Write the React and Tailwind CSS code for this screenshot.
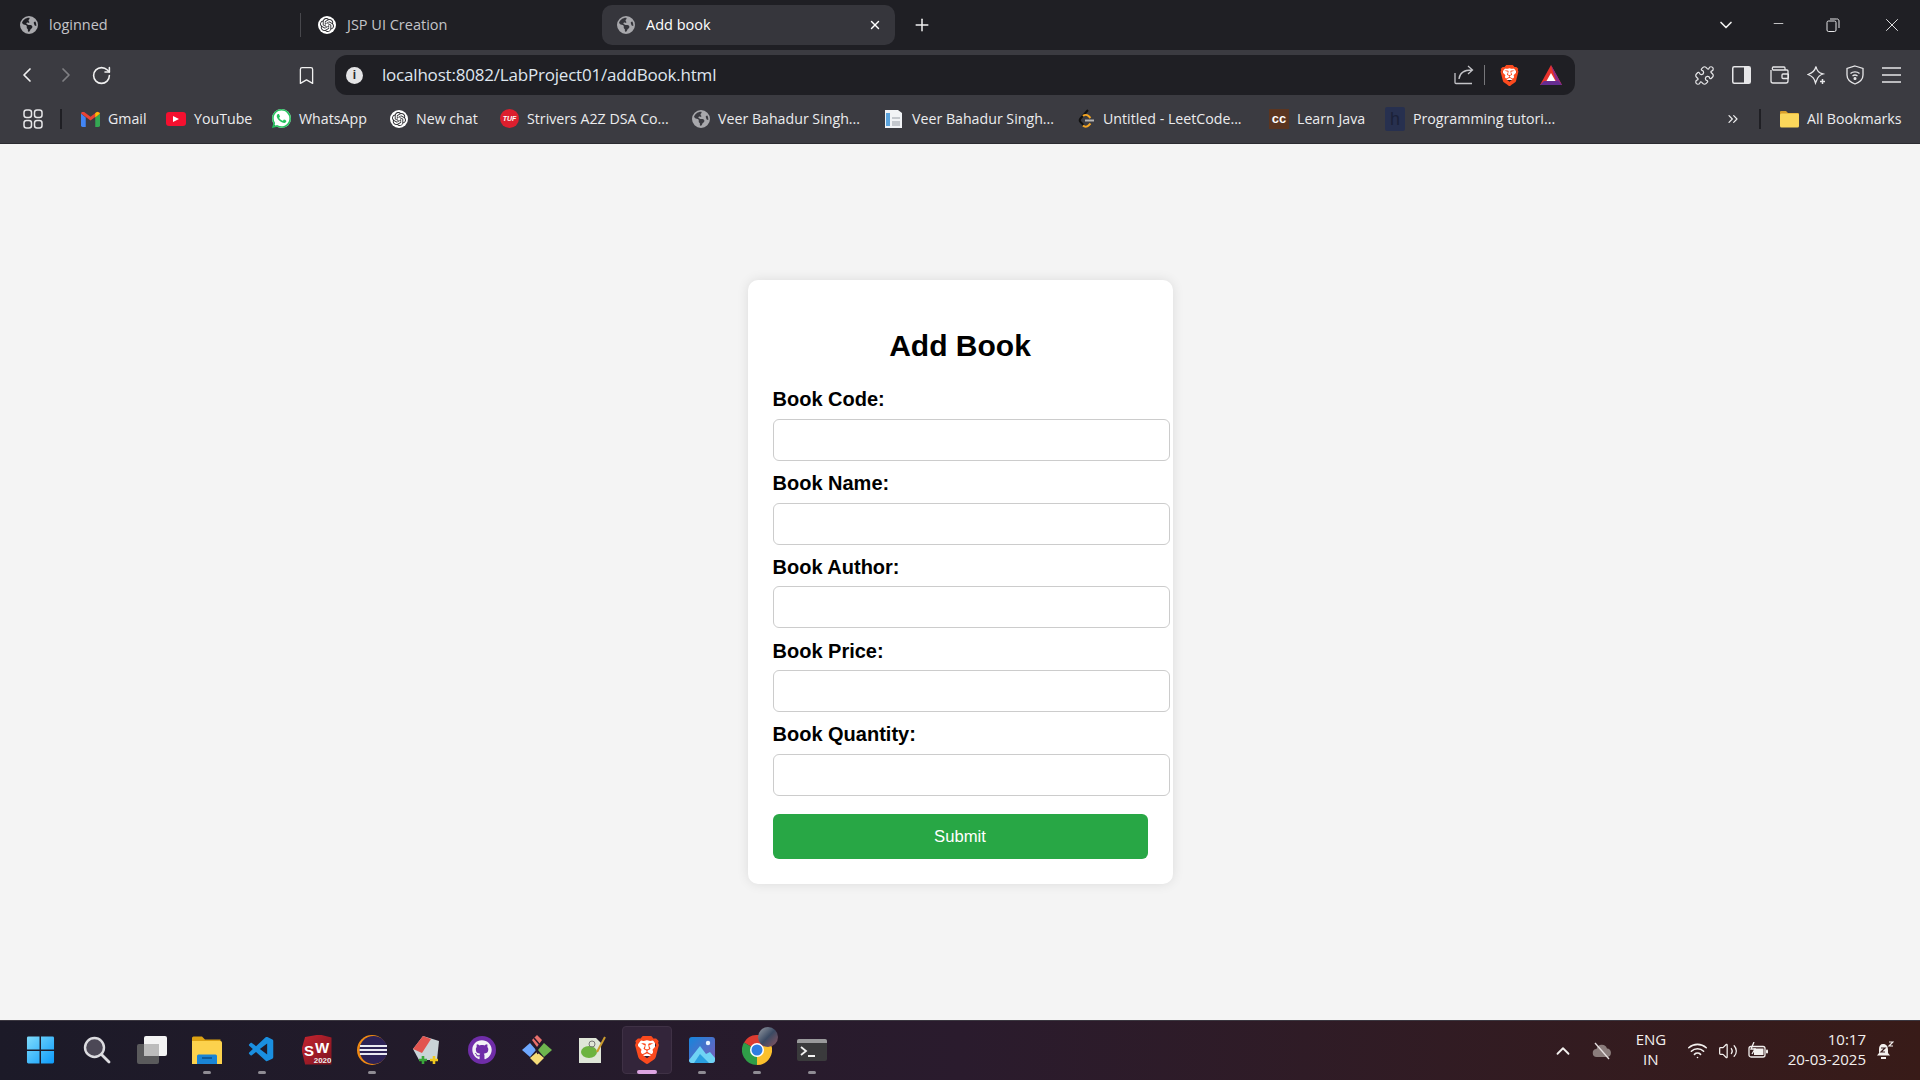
// App.jsx - browser window with the Add Book form
import React from "react";
import {
  ChevronLeft, ChevronRight, RotateCw, Bookmark, Plus, X, Minus, ChevronDown, ChevronUp,
  ChevronsRight, Puzzle, Wifi, Volume2,
} from "lucide-react";
import { FaEarthAmericas, FaGithub } from "react-icons/fa6";
import { SiOpenai, SiWhatsapp, SiBrave } from "react-icons/si";
import { VscVscode } from "react-icons/vsc";

const Globe = () => <FaEarthAmericas size={18} color="#a8a8ac" className="shrink-0" />;

const ChatIcon = () => (
  <span className="flex h-[18px] w-[18px] shrink-0 items-center justify-center rounded-full bg-white">
    <SiOpenai size={14} color="#2a2a2e" />
  </span>
);

const GmailIcon = () => (
  <svg width="19" height="16" viewBox="0 0 24 20" className="shrink-0">
    <path d="M0 3v15a2 2 0 0 0 2 2h4V8z" fill="#4285f4" />
    <path d="M24 3v15a2 2 0 0 1-2 2h-4V8z" fill="#34a853" />
    <path d="M0 3l12 9 12-9-1-2-3 0-8 6-8-6-3 0z" fill="#ea4335" />
    <path d="M18 8V2.500l3-1.700L24 3z" fill="#fbbc04" />
  </svg>
);

const YoutubeIcon = () => (
  <span className="flex h-[14px] w-[20px] shrink-0 items-center justify-center rounded-[3px] bg-[#f5102f]">
    <span className="h-0 w-0 border-y-[3.500px] border-l-[6px] border-y-transparent border-l-white" />
  </span>
);

const WhatsappIcon = () => (
  <span className="flex h-[19px] w-[19px] shrink-0 items-center justify-center rounded-full bg-white">
    <SiWhatsapp size={19} color="#25c25e" />
  </span>
);

const TufIcon = () => (
  <span className="flex h-[19px] w-[19px] shrink-0 items-center justify-center rounded-full bg-[#dc1f2e] font-['Liberation_Sans',sans-serif] text-[7px] font-bold italic text-white">
    TUF
  </span>
);

const DocIcon = () => (
  <svg width="20" height="20" viewBox="0 0 20 20" className="shrink-0">
    <path d="M1 1h13l4 3v15H1z" fill="#f1f3f6" />
    <path d="M2 4h4v13H2z" fill="#5ba3dc" />
    <path d="M8 8h8v2H8zM8 12h8v5H8z" fill="#c4c8ce" />
  </svg>
);

const LeetIcon = () => (
  <svg width="17" height="20" viewBox="0 0 17 20" fill="none" className="shrink-0">
    <path d="M10 1L2.500 9.500c-1 1.200-1 2.500 0 3.500l3 3" stroke="#111" strokeWidth="2" />
    <path d="M5 16.500c1.500 1.500 4 1.500 5.500 0l2-2M5 7c1.500-1.500 4-1.500 5.500 0l2 2" stroke="#f5a623" strokeWidth="2" />
    <path d="M7 11.500h9" stroke="#b5b5b5" strokeWidth="2" />
  </svg>
);

const CcIcon = () => (
  <span className="flex h-[20px] w-[20px] shrink-0 items-center justify-center bg-[#5a3520] font-['Liberation_Sans',sans-serif] text-[13px] font-bold leading-none text-white">
    cc
  </span>
);

const ProgIcon = () => (
  <span className="flex h-[24px] w-[20px] shrink-0 items-center justify-center rounded-[2px] bg-[#27304f] font-['Liberation_Sans',sans-serif] text-[18px] leading-none text-[#1b2138]">
    h
  </span>
);

const FolderIcon = () => (
  <svg width="19" height="18" viewBox="0 0 19 18" className="shrink-0">
    <path d="M0 2a1 1 0 0 1 1-1h5l2 2h10a1 1 0 0 1 1 1v1H0z" fill="#d99f2b" />
    <rect x="0" y="3.500" width="19" height="14" rx="1.500" fill="#fbd75b" />
  </svg>
);

const BraveIcon = ({ size }) => (
  <span className="relative flex shrink-0 items-center justify-center">
    <span className="absolute left-[18%] top-[15%] h-[60%] w-[64%] rounded-[3px] bg-white" />
    <SiBrave size={size} color="#fb4a1e" className="relative" />
  </span>
);

const BatIcon = () => (
  <svg width="22" height="20" viewBox="0 0 22 20" className="shrink-0">
    <path d="M11 0L22 20H0z" fill="#e8322c" />
    <path d="M11 0L22 20 16 16 11 0z" fill="#8a2b8a" />
    <path d="M0 20l4-4h14l4 4z" fill="#662d91" />
    <path d="M11 8l4.500 8h-9z" fill="#fff" />
  </svg>
);

const GridIcon = () => (
  <svg width="20" height="20" viewBox="0 0 20 20" fill="none" stroke="#e6e6e8" strokeWidth="1.500" className="shrink-0">
    <rect x="1" y="1" width="7.500" height="7.500" rx="2.500" />
    <rect x="11.500" y="1" width="7.500" height="7.500" rx="2.500" />
    <rect x="1" y="11.500" width="7.500" height="7.500" rx="2.500" />
    <rect x="11.500" y="11.500" width="7.500" height="7.500" rx="2.500" />
  </svg>
);

const InfoIcon = () => (
  <span className="flex h-[17px] w-[17px] shrink-0 items-center justify-center rounded-full bg-[#e4e4e6] font-['Liberation_Sans',sans-serif] text-[12px] font-bold leading-none text-[#2a2a2e]">
    i
  </span>
);

const ShareIcon = () => (
  <svg width="20" height="20" viewBox="0 0 20 20" fill="none" stroke="#c4c4c8" strokeWidth="1.300" className="shrink-0">
    <path d="M1 8v9.500a1 1 0 0 0 1 1h16" />
    <path d="M5 14c.5-6 4-9 13-9M14 1l4.500 4-4.500 4" />
  </svg>
);

const SidebarIcon = () => (
  <svg width="19" height="18" viewBox="0 0 19 18" className="shrink-0">
    <rect x="0.750" y="0.750" width="17.500" height="16.500" rx="1.500" fill="none" stroke="#e6e6e8" strokeWidth="1.500" />
    <rect x="12" y="1" width="6" height="16" fill="#e6e6e8" />
  </svg>
);

const WalletIcon = () => (
  <svg width="19" height="18" viewBox="0 0 19 18" fill="none" stroke="#e6e6e8" strokeWidth="1.300" className="shrink-0">
    <path d="M1 4v11a2 2 0 0 0 2 2h13a2 2 0 0 0 2-2V5a1 1 0 0 0-1-1H3a2 2 0 0 1 0-3h11a1 1 0 0 1 1 1v2" />
    <rect x="12" y="8" width="6.500" height="4.500" rx="1" />
  </svg>
);

const LeoIcon = () => (
  <svg width="20" height="20" viewBox="0 0 20 20" fill="none" stroke="#e6e6e8" strokeWidth="1.300" className="shrink-0">
    <path d="M9 1.500c.6 4 3 6.500 7 7.500-3 1-5 2.500-6 5.500L8.500 18C7.500 13 5.500 11 1 9.500 5.500 8 8 5.500 9 1.500z" />
    <path d="M15.500 14v5M13 16.500h5" strokeWidth="1.500" />
  </svg>
);

const ShieldWifiIcon = () => (
  <svg width="18" height="20" viewBox="0 0 18 20" fill="none" stroke="#e6e6e8" strokeWidth="1.300" className="shrink-0">
    <path d="M9 1l8 2.500V10c0 4.500-4 7.500-8 9-4-1.500-8-4.500-8-9V3.500z" />
    <path d="M4.500 8.500c2.500-2.200 6.500-2.200 9 0M6.500 11c1.500-1.200 3.500-1.200 5 0" />
    <circle cx="9" cy="13.500" r="0.900" fill="#e6e6e8" />
  </svg>
);

const MenuIcon = () => (
  <svg width="19" height="16" viewBox="0 0 19 16" className="shrink-0">
    <path d="M0 1h19M0 8h19M0 15h19" stroke="#e6e6e8" strokeWidth="1.500" />
  </svg>
);

const RestoreIcon = () => (
  <svg width="14" height="14" viewBox="0 0 14 14" fill="none" stroke="#e6e6e8" strokeWidth="1" className="shrink-0">
    <rect x="1" y="3" width="9" height="10.500" rx="1.500" />
    <path d="M4 1h6.500A2 2 0 0 1 13 3v7" />
  </svg>
);

// taskbar icons
const WindowsIcon = () => (
  <svg width="29" height="30" viewBox="0 0 30 30" className="-translate-x-[1px]">
    <defs>
      <linearGradient id="win" x1="0" y1="0" x2="1" y2="1">
        <stop offset="0" stopColor="#7fdcfb" />
        <stop offset="1" stopColor="#0c9bfb" />
      </linearGradient>
    </defs>
    <path d="M1 2.500A1.500 1.500 0 0 1 2.500 1H14v13.500H1zM15.500 1H27.500A1.500 1.500 0 0 1 29 2.500V14.500H15.500zM1 16h13v13H2.500A1.500 1.500 0 0 1 1 27.500zM15.500 16H29v11.500a1.500 1.500 0 0 1-1.500 1.500H15.500z" fill="url(#win)" />
  </svg>
);

const SearchIcon = () => (
  <svg width="28" height="28" viewBox="0 0 28 28" fill="#4c4856" stroke="#dcdce0">
    <circle cx="11.500" cy="11.500" r="9.500" strokeWidth="2.400" />
    <path d="M18.500 18.500l7.500 7.500" strokeWidth="2.800" strokeLinecap="round" />
  </svg>
);

const TaskViewIcon = () => (
  <svg width="30" height="28" viewBox="0 0 30 28">
    <rect x="0" y="8" width="22" height="20" rx="2" fill="#5a5a5c" />
    <rect x="7" y="0" width="23" height="20" rx="2" fill="#f4f4f4" />
    <rect x="7" y="8" width="15" height="12" fill="#bcbcbc" />
  </svg>
);

const ExplorerIcon = () => (
  <svg width="30" height="28" viewBox="0 0 30 28">
    <path d="M0 2a1.500 1.500 0 0 1 1.500-1.500H10l3 3h15.500V10H0z" fill="#dca213" />
    <path d="M0 5h28.500a1.500 1.500 0 0 1 1.500 1.500V28H0z" fill="#fcd24d" />
    <path d="M5 20a1.500 1.500 0 0 1 1.500-1.500h17A1.500 1.500 0 0 1 25 20v8H5z" fill="#1a85d6" />
    <path d="M10 22h10" stroke="#0c4f8a" strokeWidth="1.500" />
  </svg>
);

const SwIcon = () => (
  <div className="relative flex h-[30px] w-[30px] items-center justify-center bg-[linear-gradient(135deg,#c4242f,#7d1420)] font-['Liberation_Sans',sans-serif] text-[15px] font-bold leading-none text-white [clip-path:polygon(12%_8%,60%_0,100%_10%,100%_100%,12%_100%,0_50%)]">
    <span className="mt-[2px]">S</span>
    <span className="mb-[5px] ml-[1px]">W</span>
    <span className="absolute right-0 bottom-0 text-[8px] leading-none text-[#eeeeee]">2020</span>
  </div>
);

const EclipseIcon = () => (
  <svg width="30" height="30" viewBox="0 0 30 30">
    <circle cx="15" cy="15" r="15" fill="#f08a13" />
    <circle cx="16.500" cy="15" r="14" fill="#2c2255" />
    <path d="M3 11h27M2.500 15h28M3 19h27" stroke="#e9e9f2" strokeWidth="2" />
  </svg>
);

const PadPlusIcon = () => (
  <svg width="28" height="28" viewBox="0 0 28 28">
    <path d="M0 13L10 0l16 5-2 19H6z" fill="#c9d4d8" />
    <path d="M0 13L10 0l8 3-9 14z" fill="#e2544f" />
    <path d="M6 24h8M10 20v8" stroke="#3aa63a" strokeWidth="2.600" />
    <path d="M17 24h8M21 20v8" stroke="#f0c91e" strokeWidth="2.600" />
  </svg>
);

const GithubDesktopIcon = () => (
  <span className="flex h-[28px] w-[28px] items-center justify-center rounded-full bg-[#6f2da8]">
    <FaGithub size={20} color="#f2f2f6" />
  </span>
);

const DiamondIcon = () => (
  <svg width="30" height="30" viewBox="0 0 30 30">
    <path d="M15 0l5 5-5 7-5-7z" fill="#e8706c" />
    <path d="M0 15l8-7 6 7-6 7z" fill="#6ea8ff" />
    <path d="M30 15l-8-7-6 7 6 7z" fill="#6eb64e" />
    <path d="M15 30l-7-7 7-6 7 6z" fill="#f5dc78" />
    <path d="M12 3l6 7M14 14l2 5" stroke="#2a1b2e" strokeWidth="1.500" />
  </svg>
);

const NppIcon = () => (
  <svg width="28" height="28" viewBox="0 0 28 28">
    <path d="M1 2h17l5 5v20H1z" fill="#dfe6d8" />
    <ellipse cx="11" cy="16" rx="8" ry="6" fill="#6cb33f" />
    <circle cx="14" cy="8" r="3" fill="none" stroke="#777" strokeWidth="1" />
    <path d="M19 16L27 1" stroke="#c99a2e" strokeWidth="2" />
  </svg>
);

const PhotosIcon = () => (
  <svg width="26" height="26" viewBox="0 0 26 26">
    <defs>
      <linearGradient id="photo" x1="0" y1="0" x2="1" y2="1">
        <stop offset="0" stopColor="#1586dc" />
        <stop offset="1" stopColor="#7d5bb8" />
      </linearGradient>
    </defs>
    <rect width="26" height="26" rx="3" fill="url(#photo)" />
    <circle cx="19" cy="6" r="2.200" fill="#e8f4ff" />
    <path d="M0 23L11 9l6 8 4-2 5 6v2a3 3 0 0 1-3 3H3a3 3 0 0 1-3-2z" fill="#6fd3f5" />
    <path d="M5 26l6-9 9 9z" fill="#2a9fe0" />
  </svg>
);

const ChromeIcon = () => (
  <div className="relative h-[30px] w-[30px]">
    <svg width="30" height="30" viewBox="0 0 30 30">
      <path d="M15 15L2 7.500A15 15 0 0 1 28 7.500z" fill="#dd3b30" />
      <path d="M15 15L2 7.500A15 15 0 0 0 15 30z" fill="#2f9e48" />
      <path d="M15 15L28 7.500A15 15 0 0 1 15 30z" fill="#fbc02d" />
      <circle cx="15" cy="15" r="7" fill="#fff" />
      <circle cx="15" cy="15" r="5.500" fill="#2f7de1" />
    </svg>
    <span className="absolute -right-[6px] -top-[8px] h-[20px] w-[20px] rounded-full bg-[linear-gradient(135deg,#9a9fa6,#3b4a63_50%,#8d5560)]" />
  </div>
);

const TerminalIcon = () => (
  <svg width="30" height="22" viewBox="0 0 30 22">
    <rect width="30" height="22" rx="2" fill="#3a3a3c" />
    <path d="M0 2a2 2 0 0 1 2-2h26a2 2 0 0 1 2 2v2H0z" fill="#9a9a9c" />
    <path d="M4 8l5 4-5 4" fill="none" stroke="#f2f2f2" strokeWidth="1.800" />
    <path d="M11 17h7" stroke="#f2f2f2" strokeWidth="2" />
  </svg>
);

const TaskbarItem = ({ children, dot, active }) => (
  <div className="relative flex h-full w-[55px] shrink-0 items-center justify-center pb-[2px]">
    {active && <span className="absolute inset-x-[2.500px] bottom-[6px] top-[5px] rounded-[4px] border border-[#3f3145] bg-[#33253a]" />}
    <span className="relative flex items-center justify-center">{children}</span>
    {dot && <span className="absolute bottom-[6px] left-[23.500px] h-[3px] w-[8px] rounded-full bg-[#8f8c94]" />}
    {active && <span className="absolute bottom-[6px] left-[17.500px] h-[4px] w-[20px] rounded-full bg-[#dda4e2]" />}
  </div>
);

const CloudOffIcon = () => (
  <svg width="20" height="18" viewBox="0 0 20 18" className="shrink-0">
    <path d="M5 15a4 4 0 0 1-.5-8A5.500 5.500 0 0 1 15 6.500 4.300 4.300 0 0 1 15.500 15z" fill="#8b7d7c" />
    <path d="M3 1l14 16" stroke="#e6e0e0" strokeWidth="1.300" />
  </svg>
);

const BatteryIcon = () => (
  <svg width="20" height="18" viewBox="0 0 20 18" className="shrink-0">
    <rect x="1" y="4.500" width="16" height="10.500" rx="2" fill="none" stroke="#f3f0ee" strokeWidth="1.300" />
    <rect x="6" y="6.500" width="9.500" height="6.500" fill="#f3f0ee" />
    <rect x="18" y="7.500" width="2" height="4" rx="1" fill="#f3f0ee" />
    <path d="M6 0L3 7h4l-3 5" fill="none" stroke="#f3f0ee" strokeWidth="1.300" />
  </svg>
);

const BellIcon = () => (
  <svg width="18" height="20" viewBox="0 0 18 20" className="shrink-0">
    <path d="M7 3c3.500 0 5 2.500 5 6v3l2 2.500H1L3 12V8c0-3 1.500-5 4-5z" fill="#f3f0ee" />
    <path d="M5 17h5" stroke="#f3f0ee" strokeWidth="2" />
    <path d="M5 7h4l-4 4h4" fill="none" stroke="#35191a" strokeWidth="1.200" />
    <path d="M13 1h4l-4 4h4" fill="none" stroke="#f3f0ee" strokeWidth="1.200" />
  </svg>
);

const Field = ({ label }) => (
  <div className="mb-[11.250px]">
    <label className="mb-[7.500px] block h-[23px] text-[20px] font-bold leading-[23px] text-black">{label}</label>
    <input type="text" className="box-content block h-[40px] w-full rounded-[6px] border border-[#cccccc] bg-white px-[10px] outline-none" />
  </div>
);

const BookmarkItem = ({ icon, label, className }) => (
  <div className={`flex shrink-0 items-center ${className}`}>
    {icon}
    <span className="ml-[8px] whitespace-nowrap">{label}</span>
  </div>
);

const fields = ["Book Code:", "Book Name:", "Book Author:", "Book Price:", "Book Quantity:"];

export default function App() {
  return (
    <div className="flex h-screen w-full flex-col overflow-hidden bg-[#f4f4f4] font-['Open_Sans',sans-serif]">
      {/* Tab strip */}
      <div className="flex h-[50px] shrink-0 items-center bg-[#1f1f24] text-[14.500px] text-[#c4c4c8]">
        <div className="flex w-[300px] items-center pl-[20px]">
          <Globe />
          <span className="ml-[11px]">loginned</span>
        </div>
        <div className="h-[24px] w-px bg-[#47474c]" />
        <div className="flex w-[301px] items-center pl-[17px]">
          <ChatIcon />
          <span className="ml-[11px]">JSP UI Creation</span>
        </div>
        <div className="flex h-[40px] w-[293px] items-center rounded-[10px] bg-[#36363c] pl-[15px] pr-[13px] text-white">
          <Globe />
          <span className="ml-[11px]">Add book</span>
          <X size={14} strokeWidth={2.500} color="#fff" className="ml-auto" />
        </div>
        <Plus size={20} strokeWidth={1.800} color="#f0f0f0" className="ml-[17px]" />
        <div className="ml-auto flex items-center pr-[17px]">
          <ChevronDown size={20} strokeWidth={2} color="#f0f0f0" />
          <Minus size={15} strokeWidth={1.300} color="#e6e6e8" className="ml-[35px] -translate-y-[2px]" />
          <div className="ml-[40px]"><RestoreIcon /></div>
          <X size={22} strokeWidth={1} color="#f0f0f0" className="ml-[41px]" />
        </div>
      </div>

      {/* Toolbar */}
      <div className="flex h-[45px] shrink-0 items-start bg-[#3b3b41]">
        <div className="flex h-[45px] items-center pt-[5px]">
          <ChevronLeft size={24} strokeWidth={1.700} color="#f0f0f0" className="ml-[15px]" />
          <ChevronRight size={24} strokeWidth={1.700} color="#808084" className="ml-[15px]" />
          <RotateCw size={21} strokeWidth={1.800} color="#f0f0f0" className="ml-[13px]" />
          <Bookmark size={21} strokeWidth={1.500} color="#f0f0f0" className="ml-[184px]" />
        </div>
        <div className="ml-[18px] mt-[5px] flex h-[40px] w-[1240px] items-center rounded-[12px] bg-[#1f1f24] pl-[11px] pr-[13px]">
          <InfoIcon />
          <span className="ml-[19px] text-[17px] tracking-[-0.200px] text-[#dfe6ee]">localhost:8082/LabProject01/addBook.html</span>
          <div className="ml-auto flex items-center">
            <ShareIcon />
            <div className="ml-[10px] h-[20px] w-px bg-[#77777b]" />
            <div className="ml-[14px]"><BraveIcon size={21} /></div>
            <div className="ml-[20px]"><BatIcon /></div>
          </div>
        </div>
        <div className="ml-[119px] flex h-[45px] items-center pt-[5px]">
          <Puzzle size={21} strokeWidth={1.400} color="#e6e6e8" />
          <div className="ml-[17px]"><SidebarIcon /></div>
          <div className="ml-[19px]"><WalletIcon /></div>
          <div className="ml-[18px]"><LeoIcon /></div>
          <div className="ml-[19px]"><ShieldWifiIcon /></div>
          <div className="ml-[18px]"><MenuIcon /></div>
        </div>
      </div>

      {/* Bookmarks bar */}
      <div className="flex h-[49px] shrink-0 items-center border-b border-[#2b2b30] bg-[#3b3b41] text-[14.200px] text-[#ececee]">
        <div className="ml-[23px]"><GridIcon /></div>
        <div className="ml-[17px] h-[20px] w-[2px] bg-[#1f1f24]" />
        <BookmarkItem icon={<GmailIcon />} label="Gmail" className="ml-[19px] w-[85px]" />
        <BookmarkItem icon={<YoutubeIcon />} label="YouTube" className="w-[106px]" />
        <BookmarkItem icon={<WhatsappIcon />} label="WhatsApp" className="w-[118px]" />
        <BookmarkItem icon={<ChatIcon />} label="New chat" className="w-[110px]" />
        <BookmarkItem icon={<TufIcon />} label="Strivers A2Z DSA Co..." className="w-[192px]" />
        <BookmarkItem icon={<Globe />} label="Veer Bahadur Singh..." className="w-[192px]" />
        <BookmarkItem icon={<DocIcon />} label="Veer Bahadur Singh..." className="w-[194px]" />
        <BookmarkItem icon={<LeetIcon />} label="Untitled - LeetCode..." className="w-[191px]" />
        <BookmarkItem icon={<CcIcon />} label="Learn Java" className="w-[116px]" />
        <BookmarkItem icon={<ProgIcon />} label="Programming tutori..." className="w-[200px]" />
        <ChevronsRight size={16} strokeWidth={1.800} color="#f0f0f0" className="ml-[140px]" />
        <div className="ml-[18px] h-[20px] w-[2px] bg-[#1f1f24]" />
        <BookmarkItem icon={<FolderIcon />} label="All Bookmarks" className="ml-[19px]" />
      </div>

      {/* Page */}
      <main className="flex flex-1 items-center justify-center bg-[#f4f4f4] font-['Liberation_Sans',sans-serif]">
        <div className="w-[425px] rounded-[10px] bg-white p-[25px] shadow-[0_0_12px_rgba(0,0,0,0.1)]">
          <h2 className="mb-[25px] mt-[24px] h-[34px] text-center text-[30px] font-bold leading-[34px] text-black">Add Book</h2>
          <form onSubmit={(e) => e.preventDefault()}>
            {fields.map((f) => (
              <Field key={f} label={f} />
            ))}
            <button type="submit" className="mt-[18px] block h-[45px] w-full rounded-[6px] bg-[#28a745] text-[16.670px] text-white">
              Submit
            </button>
          </form>
        </div>
      </main>

      {/* Taskbar */}
      <footer className="flex h-[60px] shrink-0 items-center border-t border-[#3b3740] bg-gradient-to-r from-[#1c1a28] via-[#2a1b2d] to-[#381b18] text-[#f3f0ee]">
        <div className="ml-[14px] flex h-full items-center">
          <TaskbarItem><WindowsIcon /></TaskbarItem>
          <TaskbarItem><SearchIcon /></TaskbarItem>
          <TaskbarItem><TaskViewIcon /></TaskbarItem>
          <TaskbarItem dot><ExplorerIcon /></TaskbarItem>
          <TaskbarItem dot><VscVscode size={30} color="#1a8fe0" /></TaskbarItem>
          <TaskbarItem><SwIcon /></TaskbarItem>
          <TaskbarItem dot><EclipseIcon /></TaskbarItem>
          <TaskbarItem><PadPlusIcon /></TaskbarItem>
          <TaskbarItem><GithubDesktopIcon /></TaskbarItem>
          <TaskbarItem><DiamondIcon /></TaskbarItem>
          <TaskbarItem><NppIcon /></TaskbarItem>
          <TaskbarItem active><BraveIcon size={28} /></TaskbarItem>
          <TaskbarItem dot><PhotosIcon /></TaskbarItem>
          <TaskbarItem dot><ChromeIcon /></TaskbarItem>
          <TaskbarItem dot><TerminalIcon /></TaskbarItem>
        </div>
        <div className="ml-auto flex items-center pr-[26px]">
          <ChevronUp size={22} strokeWidth={2} color="#f3f0ee" />
          <div className="ml-[18px]"><CloudOffIcon /></div>
          <div className="ml-[24px] mb-[3px] w-[30px] text-center text-[15px] leading-[20px]">ENG<br />IN</div>
          <Wifi size={21} strokeWidth={1.800} color="#f3f0ee" className="ml-[21px]" />
          <Volume2 size={20} strokeWidth={1.500} color="#f3f0ee" className="ml-[10px]" />
          <div className="ml-[10px]"><BatteryIcon /></div>
          <div className="ml-[20px] mb-[3px] text-right text-[15px] leading-[20px]">10:17<br />20-03-2025</div>
          <div className="ml-[10px]"><BellIcon /></div>
        </div>
      </footer>
    </div>
  );
}
